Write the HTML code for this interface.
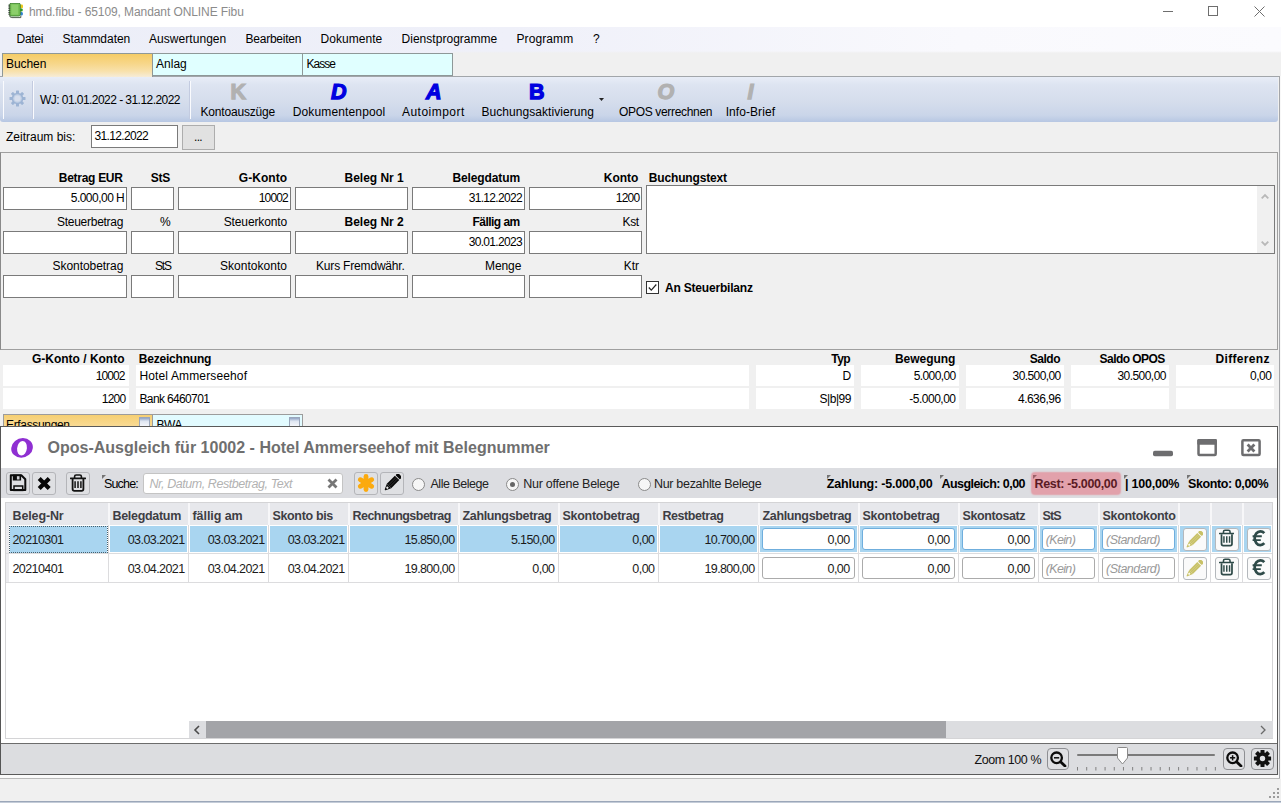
<!DOCTYPE html>
<html><head><meta charset="utf-8"><title>hmd.fibu</title>
<style>
*{box-sizing:border-box;margin:0;padding:0}
html,body{width:1281px;height:803px;overflow:hidden;background:#f0f0f0;font-family:"Liberation Sans",sans-serif;font-size:12px;color:#000}
.a{position:absolute}
.t{position:absolute;white-space:nowrap;line-height:14px;height:14px}
.b{font-weight:bold}
.i{font-style:italic}
.in{position:absolute;background:#fff;border:1px solid #7a7a7a}
.g{position:absolute;white-space:nowrap;line-height:16px;height:16px;font-size:12.500px}
.btn{position:absolute;border:1px solid #b4b5b9;border-radius:3px;background:#dfe0e3}
.gin{position:absolute;background:#fff;border:1px solid #ababab;border-radius:3px}
.gbtn{position:absolute;border:1px solid #b4b8bc;border-radius:3px;background:#fafafa}
</style></head><body>

<div class="a" style="left:0px;top:0px;width:1281px;height:27px;background:#fff"></div>
<svg class="a" style="left:8px;top:3px" width="16" height="16" viewBox="8 3 16 16">
 <path d="M9.600 15.200Q9.600 17.600 11.800 17.600H20.800V15.600" fill="#fff" stroke="#3c4a3a" stroke-width=".9"></path>
 <rect x="20" y="4.400" width="3" height="3.800" rx="1.200" fill="#e9c61c"></rect><rect x="20" y="8.600" width="2.700" height="3" rx="1" fill="#2d9a22"></rect><rect x="20" y="12" width="2.800" height="3.500" rx="1.200" fill="#2f82cf"></rect>
 <rect x="9.700" y="3.300" width="10.600" height="12.700" rx="1.400" fill="#76c155" stroke="#3b7f2e" stroke-width=".9"></rect>
 <rect x="11.400" y="4.600" width="6.600" height="10" fill="#93d272" opacity=".75"></rect>
 <g fill="#2f3a2f"><rect x="8.300" y="4.700" width="1.900" height=".9"></rect><rect x="8.300" y="6.500" width="1.900" height=".9"></rect><rect x="8.300" y="8.300" width="1.900" height=".9"></rect><rect x="8.300" y="10.100" width="1.900" height=".9"></rect><rect x="8.300" y="11.900" width="1.900" height=".9"></rect><rect x="8.300" y="13.700" width="1.900" height=".9"></rect></g>
</svg>
<div class="t " style="left: 29px; top: 4.5px; color: rgb(139, 139, 139); letter-spacing: -0.09px;">hmd.fibu - 65109, Mandant ONLINE Fibu</div>
<svg class="a" style="left:1150px;top:0" width="131" height="27" viewBox="0 0 131 27">
 <path d="M13 11.500H23" stroke="#6e6e6e" stroke-width="1" fill="none"></path>
 <rect x="58.500" y="6.500" width="9" height="9" stroke="#6e6e6e" stroke-width="1" fill="none"></rect>
 <path d="M104.500 6.500L114.500 16.500M114.500 6.500L104.500 16.500" stroke="#6e6e6e" stroke-width="1" fill="none"></path>
</svg>
<div class="a" style="left:0px;top:27px;width:1281px;height:26px;background:linear-gradient(90deg,#eceef8,#eff0f9 40%,#f9f9fd 75%,#fbfbfe)"></div>
<div class="a" style="left:453px;top:51px;width:828px;height:2px;background:linear-gradient(rgba(240,240,240,0),#f0f0f0)"></div>
<div class="t " style="left: 16.5px; top: 32px; letter-spacing: -0.27px;">Datei</div>
<div class="t " style="left: 62.5px; top: 32px; letter-spacing: -0.03px;">Stammdaten</div>
<div class="t " style="left: 149px; top: 32px; letter-spacing: 0.05px;">Auswertungen</div>
<div class="t " style="left: 245.5px; top: 32px; letter-spacing: -0.24px;">Bearbeiten</div>
<div class="t " style="left: 320.5px; top: 32px; letter-spacing: 0.05px;">Dokumente</div>
<div class="t " style="left: 401.5px; top: 32px; letter-spacing: 0.03px;">Dienstprogramme</div>
<div class="t " style="left: 516.5px; top: 32px; letter-spacing: 0.1px;">Programm</div>
<div class="t " style="left: 593px; top: 32px; letter-spacing: 0px;">?</div>
<div class="a" style="left:2px;top:53px;width:151px;height:24px;background:linear-gradient(#f5cc66,#f7d688 40%,#f8e1ac 75%,#f6ecd8);border:1px solid #8e9898;border-bottom:none"></div>
<div class="a" style="left:152px;top:53px;width:151px;height:23px;background:#e0ffff;border:1px solid #8e9898"></div>
<div class="a" style="left:302px;top:53px;width:151px;height:23px;background:#e0ffff;border:1px solid #8e9898"></div>
<div class="t " style="left: 6px; top: 57px; letter-spacing: -0.07px;">Buchen</div>
<div class="t " style="left: 156px; top: 57px; letter-spacing: 0.02px;">Anlag</div>
<div class="t " style="left: 306.5px; top: 57px; letter-spacing: -1.01px;">Kasse</div>
<div class="a" style="left:153px;top:76px;width:1127px;height:1px;background:#a2a6aa"></div>
<div class="a" style="left:0px;top:76px;width:3px;height:1px;background:#a2a6aa"></div>
<div class="a" style="left:1279px;top:76px;width:1px;height:702px;background:#a4a6aa"></div>
<div class="a" style="left:1280px;top:76px;width:1px;height:703px;background:#f8f8f8"></div>
<div class="a" style="left:0px;top:77px;width:1278px;height:45px;background:linear-gradient(#e8edf7,#dde4f1 18%,#d5ddec 55%,#cad5e9 85%,#b7c7e3);border-radius:0 0 3px 3px"></div>
<div class="a" style="left:3px;top:81px;width:1px;height:38px;background:#fafbfe"></div>
<div class="a" style="left:33px;top:81px;width:1px;height:38px;background:#fafbfe"></div>
<div class="a" style="left:32px;top:81px;width:1px;height:38px;background:#c3cbe0"></div>
<div class="a" style="left:190px;top:81px;width:1px;height:38px;background:#fafbfe"></div>
<div class="a" style="left:189px;top:81px;width:1px;height:38px;background:#c3cbe0"></div>
<svg class="a" style="left:8px;top:89px" width="19" height="19" viewBox="-9.500 -9.500 19 19">
<g fill="#9db4d4"><rect x="-1.500" y="-8" width="3" height="4" rx=".6" transform="rotate(0)"></rect><rect x="-1.500" y="-8" width="3" height="4" rx=".6" transform="rotate(45)"></rect><rect x="-1.500" y="-8" width="3" height="4" rx=".6" transform="rotate(90)"></rect><rect x="-1.500" y="-8" width="3" height="4" rx=".6" transform="rotate(135)"></rect><rect x="-1.500" y="-8" width="3" height="4" rx=".6" transform="rotate(180)"></rect><rect x="-1.500" y="-8" width="3" height="4" rx=".6" transform="rotate(225)"></rect><rect x="-1.500" y="-8" width="3" height="4" rx=".6" transform="rotate(270)"></rect><rect x="-1.500" y="-8" width="3" height="4" rx=".6" transform="rotate(315)"></rect></g>
<circle r="5.800" fill="#9db4d4"></circle><circle r="4.300" fill="#c3d1e6"></circle><circle r="3" fill="#d6deed"></circle></svg>
<div class="t " style="left: 40px; top: 93px; letter-spacing: -0.55px;">WJ: 01.01.2022 - 31.12.2022</div>
<div class="t" style="left: 230.5px; top: 80px; font-size: 21.5px; line-height: 24px; height: 24px; font-weight: bold; color: rgb(177, 177, 177); -webkit-text-stroke: 1.25px rgb(177, 177, 177); letter-spacing: 0px;">K</div>
<div class="t" style="left: 331px; top: 80px; font-size: 21.5px; line-height: 24px; height: 24px; font-weight: bold; color: rgb(0, 0, 224); -webkit-text-stroke: 1.25px rgb(0, 0, 224); font-style: italic; letter-spacing: 0px;">D</div>
<div class="t" style="left: 426px; top: 80px; font-size: 21.5px; line-height: 24px; height: 24px; font-weight: bold; color: rgb(0, 0, 224); -webkit-text-stroke: 1.25px rgb(0, 0, 224); font-style: italic; letter-spacing: 0px;">A</div>
<div class="t" style="left: 529px; top: 80px; font-size: 21.5px; line-height: 24px; height: 24px; font-weight: bold; color: rgb(0, 0, 224); -webkit-text-stroke: 1.25px rgb(0, 0, 224); letter-spacing: 0px;">B</div>
<div class="t" style="left: 657.5px; top: 80px; font-size: 21.5px; line-height: 24px; height: 24px; font-weight: bold; color: rgb(177, 177, 177); -webkit-text-stroke: 1.25px rgb(177, 177, 177); font-style: italic; letter-spacing: 0px;">O</div>
<div class="t" style="left: 747.5px; top: 80px; font-size: 21.5px; line-height: 24px; height: 24px; font-weight: bold; color: rgb(177, 177, 177); -webkit-text-stroke: 1.25px rgb(177, 177, 177); font-style: italic; letter-spacing: 0px;">I</div>
<div class="t " style="left: 200.5px; top: 104.5px; letter-spacing: -0.19px;">Kontoauszüge</div>
<div class="t " style="left: 292.7px; top: 104.5px; letter-spacing: 0.14px;">Dokumentenpool</div>
<div class="t " style="left: 402px; top: 104.5px; letter-spacing: 0.47px;">Autoimport</div>
<div class="t " style="left: 481.5px; top: 104.5px; letter-spacing: 0.05px;">Buchungsaktivierung</div>
<div class="t " style="left: 619px; top: 104.5px; letter-spacing: -0.33px;">OPOS verrechnen</div>
<div class="t " style="left: 725.7px; top: 104.5px; letter-spacing: 0.07px;">Info-Brief</div>
<svg class="a" style="left:599px;top:98px" width="6" height="4"><path d="M0 0H5L2.500 3Z" fill="#222"></path></svg>
<div class="t " style="left: 6px; top: 130px; letter-spacing: 0px;">Zeitraum bis:</div>
<div class="in" style="left:91px;top:125px;width:87px;height:23px;"></div>
<div class="t " style="left: 94.5px; top: 129px; letter-spacing: -0.66px;">31.12.2022</div>
<div class="a" style="left:182px;top:125px;width:33px;height:25px;background:#e1e1e1;border:1px solid #adadad"></div>
<div class="t " style="left: 194px; top: 130px; letter-spacing: -0.69px;">...</div>
<div class="a" style="left:0px;top:152px;width:1278px;height:198px;border:1px solid #9f9f9f;border-left:1px solid #8a8a8a;background:#f0f0f0"></div>
<div class="in" style="left:3px;top:187px;width:124px;height:23px;"></div>
<div class="in" style="left:131px;top:187px;width:43px;height:23px;"></div>
<div class="in" style="left:178px;top:187px;width:113px;height:23px;"></div>
<div class="in" style="left:295px;top:187px;width:113px;height:23px;"></div>
<div class="in" style="left:412px;top:187px;width:113px;height:23px;"></div>
<div class="in" style="left:529px;top:187px;width:113px;height:23px;"></div>
<div class="in" style="left:3px;top:231px;width:124px;height:23px;"></div>
<div class="in" style="left:131px;top:231px;width:43px;height:23px;"></div>
<div class="in" style="left:178px;top:231px;width:113px;height:23px;"></div>
<div class="in" style="left:295px;top:231px;width:113px;height:23px;"></div>
<div class="in" style="left:412px;top:231px;width:113px;height:23px;"></div>
<div class="in" style="left:529px;top:231px;width:113px;height:23px;"></div>
<div class="in" style="left:3px;top:275px;width:124px;height:23px;"></div>
<div class="in" style="left:131px;top:275px;width:43px;height:23px;"></div>
<div class="in" style="left:178px;top:275px;width:113px;height:23px;"></div>
<div class="in" style="left:295px;top:275px;width:113px;height:23px;"></div>
<div class="in" style="left:412px;top:275px;width:113px;height:23px;"></div>
<div class="in" style="left:529px;top:275px;width:113px;height:23px;"></div>
<div class="t b" style="left: 58.75px; top: 171px; letter-spacing: -0.28px;">Betrag EUR</div>
<div class="t b" style="left: 150.75px; top: 171px; letter-spacing: -0.19px;">StS</div>
<div class="t b" style="left: 238.75px; top: 171px; letter-spacing: 0.05px;">G-Konto</div>
<div class="t b" style="left: 344.5px; top: 171px; letter-spacing: -0.01px;">Beleg Nr 1</div>
<div class="t b" style="left: 452.5px; top: 171px; letter-spacing: -0.12px;">Belegdatum</div>
<div class="t b" style="left: 603.75px; top: 171px; letter-spacing: -0.02px;">Konto</div>
<div class="t b" style="left: 648.75px; top: 171px; letter-spacing: -0.15px;">Buchungstext</div>
<div class="t " style="left: 57px; top: 215px; letter-spacing: -0.27px;">Steuerbetrag</div>
<div class="t " style="left: 160px; top: 215px; letter-spacing: 0px;">%</div>
<div class="t " style="left: 223.75px; top: 215px; letter-spacing: -0.14px;">Steuerkonto</div>
<div class="t b" style="left: 344.5px; top: 215px; letter-spacing: -0.01px;">Beleg Nr 2</div>
<div class="t b" style="left: 472.5px; top: 215px; letter-spacing: -0.53px;">Fällig am</div>
<div class="t " style="left: 622.5px; top: 215px; letter-spacing: -0.32px;">Kst</div>
<div class="t " style="left: 52.5px; top: 259px; letter-spacing: -0.05px;">Skontobetrag</div>
<div class="t " style="left: 155px; top: 259px; letter-spacing: -1.2px;">StS</div>
<div class="t " style="left: 220px; top: 259px; letter-spacing: 0.03px;">Skontokonto</div>
<div class="t " style="left: 316px; top: 259px; letter-spacing: -0.18px;">Kurs Fremdwähr.</div>
<div class="t " style="left: 485px; top: 259px; letter-spacing: -0.09px;">Menge</div>
<div class="t " style="left: 623.75px; top: 259px; letter-spacing: -0.02px;">Ktr</div>
<div class="t " style="left: 70.75px; top: 191px; letter-spacing: -0.52px;">5.000,00 H</div>
<div class="t " style="left: 258.75px; top: 191px; letter-spacing: -0.85px;">10002</div>
<div class="t " style="left: 468.75px; top: 191px; letter-spacing: -0.69px;">31.12.2022</div>
<div class="t " style="left: 615.75px; top: 191px; letter-spacing: -0.76px;">1200</div>
<div class="t " style="left: 468.75px; top: 235px; letter-spacing: -0.69px;">30.01.2023</div>
<div class="in" style="left:646px;top:185px;width:629px;height:69px;"></div>
<div class="a" style="left:1257px;top:186px;width:17px;height:67px;background:#f0f0f0"></div>
<svg class="a" style="left:1260px;top:192px" width="10" height="56"><path d="M1.700 6.300L5 3L8.300 6.300M1.700 49.700L5 53L8.300 49.700" stroke="#b8b8b8" stroke-width="1.800" fill="none"></path></svg>
<div class="a" style="left:646px;top:281px;width:13px;height:13px;background:#fff;border:1px solid #333"></div>
<svg class="a" style="left:646px;top:281px" width="13" height="13"><path d="M2.800 6.500L5.300 9.200L10.300 3.500" stroke="#222" stroke-width="1.200" fill="none"></path></svg>
<div class="t b" style="left: 665px; top: 280.5px; letter-spacing: -0.2px;">An Steuerbilanz</div>
<div class="a" style="left:3px;top:365px;width:126px;height:21px;background:#fff"></div>
<div class="a" style="left:136px;top:365px;width:613px;height:21px;background:#fff"></div>
<div class="a" style="left:756px;top:365px;width:98px;height:21px;background:#fff"></div>
<div class="a" style="left:861px;top:365px;width:98px;height:21px;background:#fff"></div>
<div class="a" style="left:966px;top:365px;width:98px;height:21px;background:#fff"></div>
<div class="a" style="left:1071px;top:365px;width:98px;height:21px;background:#fff"></div>
<div class="a" style="left:1176px;top:365px;width:98px;height:21px;background:#fff"></div>
<div class="a" style="left:3px;top:388px;width:126px;height:21px;background:#fff"></div>
<div class="a" style="left:136px;top:388px;width:613px;height:21px;background:#fff"></div>
<div class="a" style="left:756px;top:388px;width:98px;height:21px;background:#fff"></div>
<div class="a" style="left:861px;top:388px;width:98px;height:21px;background:#fff"></div>
<div class="a" style="left:966px;top:388px;width:98px;height:21px;background:#fff"></div>
<div class="a" style="left:1071px;top:388px;width:98px;height:21px;background:#fff"></div>
<div class="a" style="left:1176px;top:388px;width:98px;height:21px;background:#fff"></div>
<div class="t b" style="left: 32px; top: 351.5px; letter-spacing: -0.01px;">G-Konto / Konto</div>
<div class="t b" style="left: 138.75px; top: 351.5px; letter-spacing: -0.2px;">Bezeichnung</div>
<div class="t b" style="left: 831.25px; top: 351.5px; letter-spacing: -0.56px;">Typ</div>
<div class="t b" style="left: 895px; top: 351.5px; letter-spacing: -0.05px;">Bewegung</div>
<div class="t b" style="left: 1029.7px; top: 351.5px; letter-spacing: -0.46px;">Saldo</div>
<div class="t b" style="left: 1099.6px; top: 351.5px; letter-spacing: -0.55px;">Saldo OPOS</div>
<div class="t b" style="left: 1215.6px; top: 351.5px; letter-spacing: 0.31px;">Differenz</div>
<div class="t " style="left: 95.75px; top: 369px; letter-spacing: -0.91px;">10002</div>
<div class="t " style="left: 139.5px; top: 369px; letter-spacing: 0.13px;">Hotel Ammerseehof</div>
<div class="t " style="left: 842.5px; top: 369px; letter-spacing: 0px;">D</div>
<div class="t " style="left: 913.75px; top: 369px; letter-spacing: -0.62px;">5.000,00</div>
<div class="t " style="left: 1012.6px; top: 369px; letter-spacing: -0.59px;">30.500,00</div>
<div class="t " style="left: 1117.4px; top: 369px; letter-spacing: -0.54px;">30.500,00</div>
<div class="t " style="left: 1250px; top: 369px; letter-spacing: -0.5px;">0,00</div>
<div class="t " style="left: 101.75px; top: 391.5px; letter-spacing: -0.76px;">1200</div>
<div class="t " style="left: 139.5px; top: 391.5px; letter-spacing: -0.64px;">Bank 6460701</div>
<div class="t " style="left: 819.5px; top: 391.5px; letter-spacing: -0.45px;">S|b|99</div>
<div class="t " style="left: 909.25px; top: 391.5px; letter-spacing: -0.49px;">-5.000,00</div>
<div class="t " style="left: 1018px; top: 391.5px; letter-spacing: -0.52px;">4.636,96</div>
<div class="a" style="left:3px;top:414px;width:150px;height:14px;background:linear-gradient(#f6cf72,#f9dc9a);border:1px solid #9c9c9c;border-bottom:none"></div>
<div class="a" style="left:152px;top:414px;width:151px;height:14px;background:#e2fbff;border:1px solid #9c9c9c;border-bottom:none"></div>
<div class="t " style="left: 6px; top: 418px; letter-spacing: -0.34px;">Erfassungen</div>
<div class="t " style="left: 156.5px; top: 418px; letter-spacing: -0.44px;">BWA</div>
<div class="a" style="left:139px;top:417px;width:11px;height:10px;background:linear-gradient(#8fa3c4,#dfe6f2 40%,#f4f6fa);border:1px solid #9aa6bb"></div>
<div class="a" style="left:289px;top:417px;width:11px;height:10px;background:linear-gradient(#8fa3c4,#dfe6f2 40%,#f4f6fa);border:1px solid #9aa6bb"></div>
<!--OPOS-->
<div class="a" style="left:0px;top:426px;width:1278px;height:349px;background:#fff;border:1px solid #5a5a5a;border-left:1px solid #555"></div>
<svg class="a" style="left:8px;top:434px" width="30" height="28" viewBox="8 434 30 28">
<g transform="translate(22.050 447.900) skewX(-5)"><path fill-rule="evenodd" fill="#8f2fd2" d="M-10.800 0A10.800 9.850 0 1 0 10.800 0A10.800 9.850 0 1 0 -10.800 0ZM-4.900 0.350A4.900 7.250 0 1 0 4.900 0.350A4.900 7.250 0 1 0 -4.900 0.350Z"></path></g></svg>
<div class="t b" style="left: 47.5px; top: 437.5px; font-size: 16px; line-height: 20px; height: 20px; color: rgb(111, 111, 111); letter-spacing: 0.01px;">Opos-Ausgleich für 10002 - Hotel Ammerseehof mit Belegnummer</div>
<svg class="a" style="left:1150px;top:436px" width="115" height="24" viewBox="1150 436 115 24">
<rect x="1153" y="450.800" width="20" height="5.500" rx="1.800" fill="#6d6d6f"></rect>
<rect x="1198.500" y="440.300" width="17.200" height="14.700" rx="1" fill="none" stroke="#6d6d6f" stroke-width="2.500"></rect><rect x="1197.300" y="439.100" width="19.600" height="5.700" rx="1.200" fill="#6d6d6f"></rect>
<rect x="1242.400" y="440.300" width="17.200" height="14.700" rx="1" fill="none" stroke="#6d6d6f" stroke-width="2.500"></rect>
<path d="M1247.600 444.600L1254.400 451.400M1254.400 444.600L1247.600 451.400" stroke="#6d6d6f" stroke-width="2.800"></path>
</svg>
<div class="a" style="left:1px;top:468px;width:1276px;height:30px;background:#dcdde1"></div>
<div class="btn" style="left:6px;top:472px;width:24px;height:23px;"></div>
<div class="btn" style="left:32px;top:472px;width:24px;height:23px;"></div>
<div class="btn" style="left:66px;top:472px;width:24px;height:23px;"></div>
<svg class="a" style="left:8px;top:472px" width="20" height="21" viewBox="8 472 20 21">
<path d="M10.800 475.200H21.300L25.300 479.200V490.100H10.800Z" fill="none" stroke="#0c0c0c" stroke-width="2" stroke-linejoin="round"></path>
<rect x="12.800" y="474.600" width="8.300" height="5.900" fill="#0c0c0c"></rect><rect x="16.900" y="476.200" width="2.600" height="3.300" fill="#d0d1d5"></rect>
<rect x="14" y="486" width="8.700" height="4.400" fill="none" stroke="#0c0c0c" stroke-width="1.500"></rect></svg>
<svg class="a" style="left:35px;top:475px" width="18" height="17" viewBox="35 475 18 17"><path d="M39.200 478.600L49.200 488.600M49.200 478.600L39.200 488.600" stroke="#060606" stroke-width="4.200" stroke-linecap="butt"></path></svg>
<svg class="a" style="left:70px;top:473.500px" width="16" height="18" viewBox="0 0 16 18"><path d="M0.600 4.400H15.400" stroke="#131313" stroke-width="1.700" stroke-linecap="round"></path><path d="M4.600 4V2.600Q4.600 1 6.200 1H9.800Q11.400 1 11.400 2.600V4" fill="none" stroke="#131313" stroke-width="1.600"></path>
<path d="M2.600 5V15Q2.600 16.800 4.400 16.800H11.600Q13.400 16.800 13.400 15V5" fill="none" stroke="#131313" stroke-width="1.800"></path>
<path d="M5.100 7.300V14M8 7.300V14M10.900 7.300V14" stroke="#131313" stroke-width="1.500"></path></svg>
<svg class="a" style="left:102px;top:475px" width="5" height="5"><path d="M0 0H4L0 4Z" fill="#747474"></path></svg>
<div class="g " style="left: 104px; top: 475.5px; letter-spacing: -0.84px;">Suche:</div>
<div class="gin" style="left:143px;top:473px;width:200px;height:21px;border-color:#c4c4c4"></div>
<div class="g i" style="left: 149.5px; top: 475.5px; color: rgb(178, 178, 178); letter-spacing: -0.44px;">Nr, Datum, Restbetrag, Text</div>
<svg class="a" style="left:327px;top:478px" width="11" height="11"><path d="M1.500 1.500L9.500 9.500M9.500 1.500L1.500 9.500" stroke="#767676" stroke-width="2.800"></path></svg>
<div class="btn" style="left:354px;top:472px;width:24px;height:23px;"></div>
<div class="btn" style="left:380px;top:472px;width:24px;height:23px;"></div>
<svg class="a" style="left:356px;top:473px" width="20" height="20" viewBox="-10 -10 20 20"><g stroke="#fbaa0f" stroke-width="4.800" stroke-linecap="round"><path d="M0 -6.600V6.600"></path><path d="M0 -6.600V6.600" transform="rotate(60)"></path><path d="M0 -6.600V6.600" transform="rotate(120)"></path></g></svg>
<svg class="a" style="left:383px;top:474px" width="18" height="18" viewBox="0 0 18 18"><g transform="rotate(45 9 9)"><rect x="5.900" y="-2.400" width="6.200" height="3.400" rx="1" fill="#080808"></rect><rect x="5.900" y="1.800" width="6.200" height="11.400" fill="#080808"></rect><path d="M5.900 13.200H12.100L9.600 18.600Q9 19.600 8.400 18.600Z" fill="#080808"></path><circle cx="9" cy="15.600" r="1.150" fill="#e8e8e8"></circle><path d="M8 1.800V13.200M10 1.800V13.200" stroke="#e8e8e8" stroke-width=".35" opacity=".5"></path></g></svg>
<div class="a" style="left:412px;top:478px;width:13px;height:13px;border-radius:50%;background:#f6f6f6;border:1px solid #8a8a8a"></div>
<div class="g " style="left: 430.5px; top: 475.5px; color: rgb(34, 34, 34); letter-spacing: -0.47px;">Alle Belege</div>
<div class="a" style="left:506px;top:478px;width:13px;height:13px;border-radius:50%;background:#f6f6f6;border:1px solid #8a8a8a"></div>
<div class="a" style="left:510px;top:482px;width:5px;height:5px;border-radius:50%;background:#666"></div>
<div class="g " style="left: 523.3px; top: 475.5px; color: rgb(34, 34, 34); letter-spacing: -0.26px;">Nur offene Belege</div>
<div class="a" style="left:637.5px;top:478px;width:13px;height:13px;border-radius:50%;background:#f6f6f6;border:1px solid #8a8a8a"></div>
<div class="g " style="left: 654px; top: 475.5px; color: rgb(34, 34, 34); letter-spacing: -0.31px;">Nur bezahlte Belege</div>
<svg class="a" style="left:826.5px;top:475px" width="5" height="5"><path d="M0 0H4L0 4Z" fill="#747474"></path></svg>
<div class="g b" style="left: 826.8px; top: 475.5px; letter-spacing: -0.19px;">Zahlung: -5.000,00</div>
<svg class="a" style="left:940px;top:475px" width="5" height="5"><path d="M0 0H4L0 4Z" fill="#747474"></path></svg>
<div class="g b" style="left: 941.5px; top: 475.5px; letter-spacing: -0.55px;">Ausgleich: 0,00</div>
<div class="a" style="left:1031.5px;top:472.5px;width:88px;height:21px;background:#e2a1ab;border-radius:3px;box-shadow:0 0 1.500px 1px #e2a1ab"></div>
<svg class="a" style="left:1033px;top:475px" width="5" height="5"><path d="M0 0H4L0 4Z" fill="#9c6068"></path></svg>
<div class="g b" style="left: 1034.5px; top: 475.5px; color: rgb(90, 26, 36); letter-spacing: -0.33px;">Rest: -5.000,00</div>
<svg class="a" style="left:1124px;top:475px" width="5" height="5"><path d="M0 0H4L0 4Z" fill="#747474"></path></svg>
<div class="g b" style="left: 1125px; top: 475.5px; letter-spacing: -0.23px;">| 100,00%</div>
<svg class="a" style="left:1187px;top:475px" width="5" height="5"><path d="M0 0H4L0 4Z" fill="#747474"></path></svg>
<div class="g b" style="left: 1188px; top: 475.5px; letter-spacing: -0.4px;">Skonto: 0,00%</div>
<div class="a" style="left:5px;top:502px;width:1268px;height:237px;border:1px solid #d4d4d6;background:#fff"></div>
<div class="a" style="left:6px;top:503px;width:1266px;height:22px;background:#e7e8ec"></div>
<div class="a" style="left:6px;top:525px;width:3px;height:58px;background:#ececef"></div>
<div class="g b" style="left: 12.5px; top: 507.5px; color: rgb(62, 62, 68); letter-spacing: -0.13px;">Beleg-Nr</div>
<div class="g b" style="left: 112.5px; top: 507.5px; color: rgb(62, 62, 68); letter-spacing: -0.31px;">Belegdatum</div>
<div class="g b" style="left: 192.5px; top: 507.5px; color: rgb(62, 62, 68); letter-spacing: -0.07px;">fällig am</div>
<div class="g b" style="left: 272.5px; top: 507.5px; color: rgb(62, 62, 68); letter-spacing: -0.35px;">Skonto bis</div>
<div class="g b" style="left: 352.5px; top: 507.5px; color: rgb(62, 62, 68); letter-spacing: -0.53px;">Rechnungsbetrag</div>
<div class="g b" style="left: 462.5px; top: 507.5px; color: rgb(62, 62, 68); letter-spacing: -0.35px;">Zahlungsbetrag</div>
<div class="g b" style="left: 562.5px; top: 507.5px; color: rgb(62, 62, 68); letter-spacing: -0.28px;">Skontobetrag</div>
<div class="g b" style="left: 662.5px; top: 507.5px; color: rgb(62, 62, 68); letter-spacing: -0.44px;">Restbetrag</div>
<div class="g b" style="left: 762.5px; top: 507.5px; color: rgb(62, 62, 68); letter-spacing: -0.35px;">Zahlungsbetrag</div>
<div class="g b" style="left: 862.5px; top: 507.5px; color: rgb(62, 62, 68); letter-spacing: -0.28px;">Skontobetrag</div>
<div class="g b" style="left: 962.5px; top: 507.5px; color: rgb(62, 62, 68); letter-spacing: -0.41px;">Skontosatz</div>
<div class="g b" style="left: 1042.5px; top: 507.5px; color: rgb(62, 62, 68); letter-spacing: -0.9px;">StS</div>
<div class="g b" style="left: 1102.5px; top: 507.5px; color: rgb(62, 62, 68); letter-spacing: -0.31px;">Skontokonto</div>
<div class="a" style="left:108px;top:503px;width:2px;height:22px;background:#f7f7f9"></div>
<div class="a" style="left:188px;top:503px;width:2px;height:22px;background:#f7f7f9"></div>
<div class="a" style="left:268px;top:503px;width:2px;height:22px;background:#f7f7f9"></div>
<div class="a" style="left:348px;top:503px;width:2px;height:22px;background:#f7f7f9"></div>
<div class="a" style="left:458px;top:503px;width:2px;height:22px;background:#f7f7f9"></div>
<div class="a" style="left:558px;top:503px;width:2px;height:22px;background:#f7f7f9"></div>
<div class="a" style="left:658px;top:503px;width:2px;height:22px;background:#f7f7f9"></div>
<div class="a" style="left:758px;top:503px;width:2px;height:22px;background:#f7f7f9"></div>
<div class="a" style="left:858px;top:503px;width:2px;height:22px;background:#f7f7f9"></div>
<div class="a" style="left:958px;top:503px;width:2px;height:22px;background:#f7f7f9"></div>
<div class="a" style="left:1038px;top:503px;width:2px;height:22px;background:#f7f7f9"></div>
<div class="a" style="left:1098px;top:503px;width:2px;height:22px;background:#f7f7f9"></div>
<div class="a" style="left:1178px;top:503px;width:2px;height:22px;background:#f7f7f9"></div>
<div class="a" style="left:1210px;top:503px;width:2px;height:22px;background:#f7f7f9"></div>
<div class="a" style="left:1242px;top:503px;width:2px;height:22px;background:#f7f7f9"></div>
<div class="a" style="left:10px;top:526px;width:97px;height:27px;background:#a9d5f0"></div>
<div class="a" style="left:110px;top:526px;width:77px;height:26px;background:#a9d5f0"></div>
<div class="a" style="left:190px;top:526px;width:77px;height:26px;background:#a9d5f0"></div>
<div class="a" style="left:270px;top:526px;width:77px;height:26px;background:#a9d5f0"></div>
<div class="a" style="left:350px;top:526px;width:107px;height:26px;background:#a9d5f0"></div>
<div class="a" style="left:460px;top:526px;width:97px;height:26px;background:#a9d5f0"></div>
<div class="a" style="left:560px;top:526px;width:97px;height:26px;background:#a9d5f0"></div>
<div class="a" style="left:660px;top:526px;width:97px;height:26px;background:#a9d5f0"></div>
<div class="a" style="left:760px;top:526px;width:97px;height:26px;background:#a9d5f0"></div>
<div class="a" style="left:860px;top:526px;width:97px;height:26px;background:#a9d5f0"></div>
<div class="a" style="left:960px;top:526px;width:77px;height:26px;background:#a9d5f0"></div>
<div class="a" style="left:1040px;top:526px;width:57px;height:26px;background:#a9d5f0"></div>
<div class="a" style="left:1100px;top:526px;width:77px;height:26px;background:#a9d5f0"></div>
<div class="a" style="left:1180px;top:526px;width:29px;height:26px;background:#a9d5f0"></div>
<div class="a" style="left:1212px;top:526px;width:29px;height:26px;background:#a9d5f0"></div>
<div class="a" style="left:1244px;top:526px;width:27px;height:26px;background:#a9d5f0"></div>
<div class="a" style="left:6px;top:553px;width:1266px;height:1px;background:#dcdcde"></div>
<div class="a" style="left:6px;top:582px;width:1266px;height:1px;background:#dcdcde"></div>
<div class="a" style="left:108px;top:525px;width:1px;height:58px;background:#dcdcde"></div>
<div class="a" style="left:188px;top:525px;width:1px;height:58px;background:#dcdcde"></div>
<div class="a" style="left:268px;top:525px;width:1px;height:58px;background:#dcdcde"></div>
<div class="a" style="left:348px;top:525px;width:1px;height:58px;background:#dcdcde"></div>
<div class="a" style="left:458px;top:525px;width:1px;height:58px;background:#dcdcde"></div>
<div class="a" style="left:558px;top:525px;width:1px;height:58px;background:#dcdcde"></div>
<div class="a" style="left:658px;top:525px;width:1px;height:58px;background:#dcdcde"></div>
<div class="a" style="left:758px;top:525px;width:1px;height:58px;background:#dcdcde"></div>
<div class="a" style="left:858px;top:525px;width:1px;height:58px;background:#dcdcde"></div>
<div class="a" style="left:958px;top:525px;width:1px;height:58px;background:#dcdcde"></div>
<div class="a" style="left:1038px;top:525px;width:1px;height:58px;background:#dcdcde"></div>
<div class="a" style="left:1098px;top:525px;width:1px;height:58px;background:#dcdcde"></div>
<div class="a" style="left:1178px;top:525px;width:1px;height:58px;background:#dcdcde"></div>
<div class="a" style="left:1210px;top:525px;width:1px;height:58px;background:#dcdcde"></div>
<div class="a" style="left:1242px;top:525px;width:1px;height:58px;background:#dcdcde"></div>
<div class="a" style="left:9px;top:526px;width:99px;height:27px;border:1px dotted #46606e"></div>
<div class="g " style="left: 12.5px; top: 531.75px; color: rgb(26, 26, 26); letter-spacing: -0.58px;">20210301</div>
<div class="g " style="left: 127.75px; top: 531.75px; color: rgb(26, 26, 26); letter-spacing: -0.58px;">03.03.2021</div>
<div class="g " style="left: 207.75px; top: 531.75px; color: rgb(26, 26, 26); letter-spacing: -0.58px;">03.03.2021</div>
<div class="g " style="left: 287.75px; top: 531.75px; color: rgb(26, 26, 26); letter-spacing: -0.58px;">03.03.2021</div>
<div class="g " style="left: 404.5px; top: 531.75px; color: rgb(26, 26, 26); letter-spacing: -0.62px;">15.850,00</div>
<div class="g " style="left: 511px; top: 531.75px; color: rgb(26, 26, 26); letter-spacing: -0.65px;">5.150,00</div>
<div class="g " style="left: 632.25px; top: 531.75px; color: rgb(26, 26, 26); letter-spacing: -0.51px;">0,00</div>
<div class="g " style="left: 704.5px; top: 531.75px; color: rgb(26, 26, 26); letter-spacing: -0.62px;">10.700,00</div>
<div class="g " style="left: 12.5px; top: 560.5px; color: rgb(26, 26, 26); letter-spacing: -0.58px;">20210401</div>
<div class="g " style="left: 127.75px; top: 560.5px; color: rgb(26, 26, 26); letter-spacing: -0.58px;">03.04.2021</div>
<div class="g " style="left: 207.75px; top: 560.5px; color: rgb(26, 26, 26); letter-spacing: -0.58px;">03.04.2021</div>
<div class="g " style="left: 287.75px; top: 560.5px; color: rgb(26, 26, 26); letter-spacing: -0.58px;">03.04.2021</div>
<div class="g " style="left: 404.5px; top: 560.5px; color: rgb(26, 26, 26); letter-spacing: -0.62px;">19.800,00</div>
<div class="g " style="left: 532.25px; top: 560.5px; color: rgb(26, 26, 26); letter-spacing: -0.51px;">0,00</div>
<div class="g " style="left: 632.25px; top: 560.5px; color: rgb(26, 26, 26); letter-spacing: -0.51px;">0,00</div>
<div class="g " style="left: 704.5px; top: 560.5px; color: rgb(26, 26, 26); letter-spacing: -0.62px;">19.800,00</div>
<div class="gin" style="left:762px;top:528px;width:93px;height:22px;border-color:#6faedd"></div>
<div class="g " style="left: 827.45px; top: 531.75px; color: rgb(26, 26, 26); letter-spacing: -0.51px;">0,00</div>
<div class="gin" style="left:862px;top:528px;width:93px;height:22px;border-color:#6faedd"></div>
<div class="g " style="left: 927.45px; top: 531.75px; color: rgb(26, 26, 26); letter-spacing: -0.51px;">0,00</div>
<div class="gin" style="left:962px;top:528px;width:73px;height:22px;border-color:#6faedd"></div>
<div class="g " style="left: 1007.45px; top: 531.75px; color: rgb(26, 26, 26); letter-spacing: -0.51px;">0,00</div>
<div class="gin" style="left:1042px;top:528px;width:53px;height:22px;border-color:#6faedd"></div>
<div class="g i" style="left: 1045.7px; top: 531.75px; color: rgb(154, 154, 154); letter-spacing: -0.64px;">(Kein)</div>
<div class="gin" style="left:1102px;top:528px;width:73px;height:22px;border-color:#6faedd"></div>
<div class="g i" style="left: 1106px; top: 531.75px; color: rgb(154, 154, 154); letter-spacing: -0.52px;">(Standard)</div>
<div class="gbtn" style="left:1183px;top:528px;width:24px;height:23px;"></div>
<div class="gbtn" style="left:1215px;top:528px;width:24px;height:23px;"></div>
<div class="gbtn" style="left:1247px;top:528px;width:24px;height:23px;"></div>
<svg class="a" style="left:1185px;top:530.5px" width="18" height="18" viewBox="0 0 18 18"><g transform="translate(9 9) rotate(45) scale(.86 1.020) rotate(-45) translate(-9 -9)"><g transform="rotate(45 9 9)"><rect x="5.900" y="-2.400" width="6.200" height="3.400" rx="1" fill="#c8c166"></rect><rect x="5.900" y="1.800" width="6.200" height="11.400" fill="#c8c166"></rect><path d="M5.900 13.200H12.100L9.600 18.600Q9 19.600 8.400 18.600Z" fill="#c8c166"></path><circle cx="9" cy="15.600" r="1.150" fill="#fbfbf0"></circle><path d="M8 1.800V13.200M10 1.800V13.200" stroke="#fbfbf0" stroke-width=".35" opacity=".5"></path></g></g></svg>
<svg class="a" style="left:1218.600px;top:529.4px" width="15.500" height="18" viewBox="0 0 16 18"><path d="M0.600 4.400H15.400" stroke="#2e4a48" stroke-width="1.700" stroke-linecap="round"></path><path d="M4.600 4V2.600Q4.600 1 6.200 1H9.800Q11.400 1 11.400 2.600V4" fill="none" stroke="#2e4a48" stroke-width="1.600"></path>
<path d="M2.600 5V15Q2.600 16.800 4.400 16.800H11.600Q13.400 16.800 13.400 15V5" fill="none" stroke="#2e4a48" stroke-width="1.800"></path>
<path d="M5.100 7.300V14M8 7.300V14M10.900 7.300V14" stroke="#2e4a48" stroke-width="1.500"></path></svg>
<svg class="a" style="left:1250px;top:528px" width="18" height="23" viewBox="1250 528 18 23"><path d="M1264.300 533.200A5.700 6.900 0 1 0 1264.300 543.200" fill="none" stroke="#2e4a48" stroke-width="2.700"></path><path d="M1252.600 536.300H1261.800M1252.600 540.100H1260.800" stroke="#2e4a48" stroke-width="1.900"></path></svg>
<div class="gin" style="left:762px;top:557px;width:93px;height:22px;border-color:#ababab"></div>
<div class="g " style="left: 827.45px; top: 560.5px; color: rgb(26, 26, 26); letter-spacing: -0.51px;">0,00</div>
<div class="gin" style="left:862px;top:557px;width:93px;height:22px;border-color:#ababab"></div>
<div class="g " style="left: 927.45px; top: 560.5px; color: rgb(26, 26, 26); letter-spacing: -0.51px;">0,00</div>
<div class="gin" style="left:962px;top:557px;width:73px;height:22px;border-color:#ababab"></div>
<div class="g " style="left: 1007.45px; top: 560.5px; color: rgb(26, 26, 26); letter-spacing: -0.51px;">0,00</div>
<div class="gin" style="left:1042px;top:557px;width:53px;height:22px;border-color:#ababab"></div>
<div class="g i" style="left: 1045.7px; top: 560.5px; color: rgb(154, 154, 154); letter-spacing: -0.64px;">(Kein)</div>
<div class="gin" style="left:1102px;top:557px;width:73px;height:22px;border-color:#ababab"></div>
<div class="g i" style="left: 1106px; top: 560.5px; color: rgb(154, 154, 154); letter-spacing: -0.52px;">(Standard)</div>
<div class="gbtn" style="left:1183px;top:557px;width:24px;height:23px;"></div>
<div class="gbtn" style="left:1215px;top:557px;width:24px;height:23px;"></div>
<div class="gbtn" style="left:1247px;top:557px;width:24px;height:23px;"></div>
<svg class="a" style="left:1185px;top:559.5px" width="18" height="18" viewBox="0 0 18 18"><g transform="translate(9 9) rotate(45) scale(.86 1.020) rotate(-45) translate(-9 -9)"><g transform="rotate(45 9 9)"><rect x="5.900" y="-2.400" width="6.200" height="3.400" rx="1" fill="#c8c166"></rect><rect x="5.900" y="1.800" width="6.200" height="11.400" fill="#c8c166"></rect><path d="M5.900 13.200H12.100L9.600 18.600Q9 19.600 8.400 18.600Z" fill="#c8c166"></path><circle cx="9" cy="15.600" r="1.150" fill="#fbfbf0"></circle><path d="M8 1.800V13.200M10 1.800V13.200" stroke="#fbfbf0" stroke-width=".35" opacity=".5"></path></g></g></svg>
<svg class="a" style="left:1218.600px;top:558.4px" width="15.500" height="18" viewBox="0 0 16 18"><path d="M0.600 4.400H15.400" stroke="#2e4a48" stroke-width="1.700" stroke-linecap="round"></path><path d="M4.600 4V2.600Q4.600 1 6.200 1H9.800Q11.400 1 11.400 2.600V4" fill="none" stroke="#2e4a48" stroke-width="1.600"></path>
<path d="M2.600 5V15Q2.600 16.800 4.400 16.800H11.600Q13.400 16.800 13.400 15V5" fill="none" stroke="#2e4a48" stroke-width="1.800"></path>
<path d="M5.100 7.300V14M8 7.300V14M10.900 7.300V14" stroke="#2e4a48" stroke-width="1.500"></path></svg>
<svg class="a" style="left:1250px;top:557px" width="18" height="23" viewBox="1250 528 18 23"><path d="M1264.300 533.200A5.700 6.900 0 1 0 1264.300 543.200" fill="none" stroke="#2e4a48" stroke-width="2.700"></path><path d="M1252.600 536.300H1261.800M1252.600 540.100H1260.800" stroke="#2e4a48" stroke-width="1.900"></path></svg>
<div class="a" style="left:189px;top:721px;width:1084px;height:17px;background:#dcdde0"></div>
<div class="a" style="left:206px;top:721px;width:740px;height:17px;background:#a3a4a8"></div>
<svg class="a" style="left:193px;top:725px" width="8" height="10"><path d="M6 1L2 5L6 9" stroke="#4a4a4a" stroke-width="1.600" fill="none"></path></svg>
<svg class="a" style="left:1259px;top:725px" width="8" height="10"><path d="M2 1L6 5L2 9" stroke="#6a6a6a" stroke-width="1.300" fill="none"></path></svg>
<div class="a" style="left:1px;top:743px;width:1276px;height:31px;background:#dcdde0;border-top:1px solid #6c6c6c"></div>
<div class="g " style="left: 974.5px; top: 751.5px; color: rgb(17, 17, 17); letter-spacing: -0.43px;">Zoom 100 %</div>
<div class="btn" style="left:1047px;top:748px;width:22px;height:22px;border-color:#8e8f93;border-radius:4px"></div>
<div class="btn" style="left:1223px;top:748px;width:22px;height:22px;border-color:#8e8f93;border-radius:4px"></div>
<div class="btn" style="left:1251px;top:748px;width:23px;height:22px;border-color:#8e8f93;border-radius:4px"></div>
<svg class="a" style="left:1050px;top:750px" width="17" height="17" viewBox="0 0 17 17"><circle cx="6.600" cy="7.800" r="5.300" fill="none" stroke="#0c0c0c" stroke-width="2.300"></circle><path d="M10.800 12L15 16" stroke="#0c0c0c" stroke-width="2.800" stroke-linecap="round"></path><path d="M4 7.800H9.200" stroke="#0c0c0c" stroke-width="1.500"></path></svg>
<svg class="a" style="left:1226px;top:750px" width="17" height="17" viewBox="0 0 17 17"><circle cx="6.600" cy="7.800" r="5.300" fill="none" stroke="#0c0c0c" stroke-width="2.300"></circle><path d="M10.800 12L15 16" stroke="#0c0c0c" stroke-width="2.800" stroke-linecap="round"></path><path d="M4 7.800H9.200" stroke="#0c0c0c" stroke-width="1.500"></path><path d="M6.600 5.200V10.400" stroke="#0c0c0c" stroke-width="1.500"></path></svg>
<svg class="a" style="left:1253px;top:749px" width="19" height="19" viewBox="-9.500 -9.500 19 19"><g fill="#111"><rect x="-2" y="-8.600" width="4" height="4.400" rx=".5" transform="rotate(0)"></rect><rect x="-2" y="-8.600" width="4" height="4.400" rx=".5" transform="rotate(45)"></rect><rect x="-2" y="-8.600" width="4" height="4.400" rx=".5" transform="rotate(90)"></rect><rect x="-2" y="-8.600" width="4" height="4.400" rx=".5" transform="rotate(135)"></rect><rect x="-2" y="-8.600" width="4" height="4.400" rx=".5" transform="rotate(180)"></rect><rect x="-2" y="-8.600" width="4" height="4.400" rx=".5" transform="rotate(225)"></rect><rect x="-2" y="-8.600" width="4" height="4.400" rx=".5" transform="rotate(270)"></rect><rect x="-2" y="-8.600" width="4" height="4.400" rx=".5" transform="rotate(315)"></rect></g><circle r="6.200" fill="#111"></circle><circle r="2.700" fill="#dfe0e3"></circle></svg>
<div class="a" style="left:1077px;top:754px;width:138px;height:2px;background:#7a7a7a;border-radius:1px"></div>
<svg class="a" style="left:1076px;top:767px" width="142" height="5"><rect x="1.00" y="0" width="1" height="3.500" fill="#808080"></rect><rect x="10.19" y="0" width="1" height="3.500" fill="#808080"></rect><rect x="19.38" y="0" width="1" height="3.500" fill="#808080"></rect><rect x="28.57" y="0" width="1" height="3.500" fill="#808080"></rect><rect x="37.76" y="0" width="1" height="3.500" fill="#808080"></rect><rect x="46.95" y="0" width="1" height="3.500" fill="#808080"></rect><rect x="56.14" y="0" width="1" height="3.500" fill="#808080"></rect><rect x="65.33" y="0" width="1" height="3.500" fill="#808080"></rect><rect x="74.52" y="0" width="1" height="3.500" fill="#808080"></rect><rect x="83.71" y="0" width="1" height="3.500" fill="#808080"></rect><rect x="92.90" y="0" width="1" height="3.500" fill="#808080"></rect><rect x="102.09" y="0" width="1" height="3.500" fill="#808080"></rect><rect x="111.28" y="0" width="1" height="3.500" fill="#808080"></rect><rect x="120.47" y="0" width="1" height="3.500" fill="#808080"></rect><rect x="129.66" y="0" width="1" height="3.500" fill="#808080"></rect><rect x="138.85" y="0" width="1" height="3.500" fill="#808080"></rect></svg>
<svg class="a" style="left:1116px;top:746px" width="14" height="20"><path d="M1.500 2.500Q1.500 1.500 2.500 1.500H10.500Q11.500 1.500 11.500 2.500V12L6.500 18L1.500 12Z" fill="#fff" stroke="#8a8a8a" stroke-width="1"></path></svg>
<div class="a" style="left:0px;top:775px;width:1279px;height:3px;background:#fafafa"></div>
<div class="a" style="left:0px;top:778px;width:1280px;height:1px;background:#b9b9b9"></div>
<div class="a" style="left:0px;top:779px;width:1281px;height:24px;background:#f0f0f0"></div>
<div class="a" style="left:0px;top:801px;width:1281px;height:1px;background:#9ba7b9"></div>
<div class="a" style="left:0px;top:802px;width:1281px;height:1px;background:#c4ccd8"></div>
<svg class="a" style="left:1269px;top:788px" width="11" height="11"><rect x="8" y="0" width="2" height="2" fill="#9c9c9c"></rect><rect x="4" y="4" width="2" height="2" fill="#9c9c9c"></rect><rect x="8" y="4" width="2" height="2" fill="#9c9c9c"></rect><rect x="0" y="8" width="2" height="2" fill="#9c9c9c"></rect><rect x="4" y="8" width="2" height="2" fill="#9c9c9c"></rect><rect x="8" y="8" width="2" height="2" fill="#9c9c9c"></rect></svg>

</body></html>
